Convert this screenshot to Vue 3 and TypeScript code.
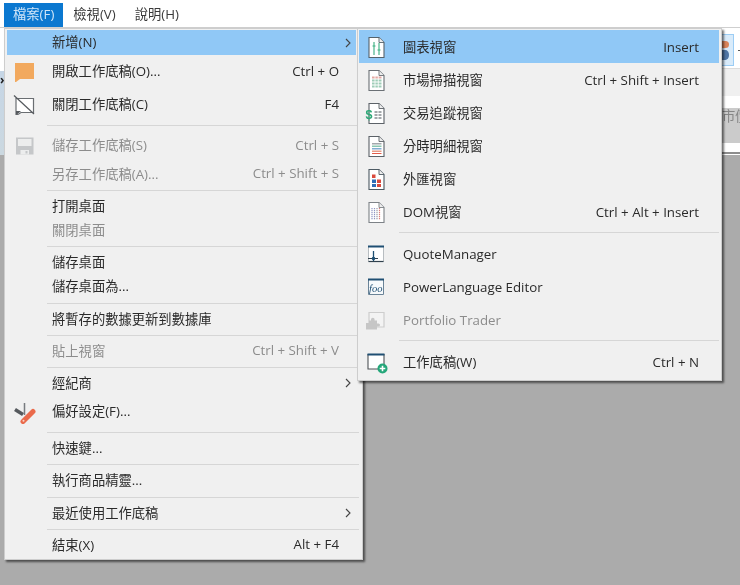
<script setup lang="ts">
interface Entry {
  sep?: boolean
  label?: string
  key?: string
  icon?: string
  tall?: boolean
  roomy?: boolean
  off?: boolean
  arrow?: boolean
  active?: boolean
}

const doc = (inner: string, stroke = '#5c6268') =>
  `<path d="M5 2.500h10l5 5v15H5z" fill="#fff" stroke="${stroke}" stroke-width="1.100"/><path d="M15 2.500v5h5" fill="#eee" stroke="${stroke}" stroke-width=".9"/>${inner}`

const icons: Record<string, string> = {
  open: '<path d="M2 3h19v16H7l-4 3H2z" fill="#f2a95e"/>',
  close:
    '<path d="M3 5.500h17.500v14H8l-3 2H3z" fill="#fff" stroke="#6a6e72" stroke-width="1.200"/><path d="M3 18h5l-4 3.500H3z" fill="#55595d"/><path d="M1 2.500 21 21" stroke="#55595d" stroke-width="1.200"/>',
  save:
    '<path d="M3 3.500h17.500v17H3z" fill="#c5c7c9"/><path d="M5 5h13.500v7H5z" fill="#eceded"/><path d="M7.500 16h8.500v4.500H7.500z" fill="#eceded"/><path d="M12.500 17h2v2.500h-2z" fill="#c5c7c9"/>',
  prefs:
    '<path d="M11.500 3v12" stroke="#777b7f" stroke-width="1.500" fill="none"/><path d="M2 9.500l8 5" stroke="#55595d" stroke-width="3.500" fill="none"/><path d="M10 21.500 20 11.500" stroke="#ea6a4b" stroke-width="5" stroke-linecap="round"/><circle cx="10.500" cy="20.800" r="1" fill="#fbd6c8"/>',
  chart: doc(
    '<path d="M10 7v13M15 8v12" stroke="#3aae80" stroke-width="1.100"/><path d="M8.500 11h3M13.500 15h3" stroke="#3aae80" stroke-width="1.100"/>',
    '#56636c',
  ),
  scan: doc(
    '<path d="M8 8.500h9.500v2H8z" fill="#e3a9a3"/><path d="M8 11.500h9.500v2H8zM8 14.500h9.500v2H8zM8 17.500h9.500v2H8z" fill="#9fcdb8"/><path d="M11 8v12M14.300 8v12" stroke="#fff" stroke-width=".8"/>',
    '#6b7075',
  ),
  trade:
    doc('<path d="M10.500 10h3v2h-3zM14.500 10h3v2h-3zM10.500 13h3v2h-3zM14.500 13h3v2h-3zM10.500 16h3v2h-3zM14.500 16h3v2h-3z" fill="#a4a8ab"/>') +
    '<text x="1.500" y="18" font-size="12.500" font-weight="700" fill="#2ea877" font-family="Liberation Sans, sans-serif">$</text>',
  tick: doc(
    '<path d="M8 9h9.500v1.500H8z" fill="#a3a8ac"/><path d="M8 11.500h9.500V13H8z" fill="#8bc7b1"/><path d="M8 14h9.500v1.500H8z" fill="#82add2"/><path d="M8 16.500h9.500V18H8z" fill="#e79a86"/><path d="M8 19h9.500v1H8z" fill="#e25c4a"/>',
  ),
  forex: doc(
    '<path d="M8 7.500h3.500v3.500H8zM13 12.500h4V16h-4z" fill="#d94a3d"/><path d="M8 12.500h4V16H8zM8 17h4v3H8z" fill="#2f6db5"/><path d="M13 17h4v3h-4z" fill="#d94a3d"/>',
    '#4d5a63',
  ),
  dom: doc(
    '<path d="M8 8v12M10.500 8v12" stroke="#8f96c4" stroke-width="1.200" stroke-dasharray="1.200 .8"/><path d="M13 8v12" stroke="#9a9ca8" stroke-width="1.200" stroke-dasharray="1.200 .8"/><path d="M15.500 8v12" stroke="#dd7f7a" stroke-width="1.200" stroke-dasharray="1.200 .8"/>',
    '#7d8287',
  ),
  quote:
    '<path d="M4.500 4.500h15v15h-15z" fill="#fff" stroke="#a7adb2" stroke-width=".8"/><path d="M4 3.500h16v2H4z" fill="#1f4f73"/><path d="M4.500 19.500h15" stroke="#30404d" stroke-width="1.200"/><path d="M4 16.500h10" stroke="#30404d" stroke-width="1"/><path d="M9.500 9v10" stroke="#1f4f73" stroke-width="1.300"/><circle cx="9.500" cy="16.500" r="1.800" fill="#1f4f73"/>',
  power:
    '<path d="M4.500 4.500h15v15h-15z" fill="#f7fafc" stroke="#6b8498" stroke-width="1"/><path d="M4 3.500h16v2H4z" fill="#1f4f73"/><text x="5" y="16.500" font-size="10.500" font-style="italic" fill="#1f4f73" font-family="Liberation Serif, serif">foo</text>',
  portfolio:
    '<path d="M5 4.500h15v14.500H5z" fill="#f3f3f3" stroke="#cdcdcd" stroke-width="1.200"/><path d="M2 15h3v-2.500h2v-1a1.800 1.800 0 0 1 3.600 0v1h2.400v3h1.500a1.500 1.500 0 0 1 0 3H13v3H2z" fill="#c6c6c6"/>',
  workspace:
    '<path d="M4 4.500h16v14.500H4z" fill="#fff" stroke="#4f5357" stroke-width="1.100"/><path d="M3.500 3.500h17v2h-17z" fill="#1f4f73"/><circle cx="18.500" cy="18.500" r="5" fill="#23a679"/><path d="M18.500 15.700v5.600M15.700 18.500h5.600" stroke="#fff" stroke-width="1.600"/>',
}

const mainItems: Entry[] = [
  { label: '新增(N)', arrow: true, active: true },
  { label: '開啟工作底稿(O)...', key: 'Ctrl + O', icon: 'open', tall: true },
  { label: '關閉工作底稿(C)', key: 'F4', icon: 'close', tall: true },
  { sep: true },
  { label: '儲存工作底稿(S)', key: 'Ctrl + S', icon: 'save', tall: true, off: true },
  { label: '另存工作底稿(A)...', key: 'Ctrl + Shift + S', off: true },
  { sep: true },
  { label: '打開桌面' },
  { label: '關閉桌面', off: true },
  { sep: true },
  { label: '儲存桌面' },
  { label: '儲存桌面為...', roomy: true },
  { sep: true },
  { label: '將暫存的數據更新到數據庫' },
  { sep: true },
  { label: '貼上視窗', key: 'Ctrl + Shift + V', off: true },
  { sep: true },
  { label: '經紀商', arrow: true },
  { label: '偏好設定(F)...', icon: 'prefs', tall: true },
  { sep: true },
  { label: '快速鍵...' },
  { sep: true },
  { label: '執行商品精靈...', roomy: true },
  { sep: true },
  { label: '最近使用工作底稿', arrow: true },
  { sep: true },
  { label: '結束(X)', key: 'Alt + F4' },
]

const subItems: Entry[] = [
  { label: '圖表視窗', key: 'Insert', icon: 'chart', tall: true, active: true },
  { label: '市場掃描視窗', key: 'Ctrl + Shift + Insert', icon: 'scan', tall: true },
  { label: '交易追蹤視窗', icon: 'trade', tall: true },
  { label: '分時明細視窗', icon: 'tick', tall: true },
  { label: '外匯視窗', icon: 'forex', tall: true },
  { label: 'DOM視窗', key: 'Ctrl + Alt + Insert', icon: 'dom', tall: true },
  { sep: true },
  { label: 'QuoteManager', icon: 'quote', tall: true },
  { label: 'PowerLanguage Editor', icon: 'power', tall: true },
  { label: 'Portfolio Trader', icon: 'portfolio', tall: true, off: true },
  { sep: true },
  { label: '工作底稿(W)', key: 'Ctrl + N', icon: 'workspace', tall: true },
]
</script>

<template>
  <div class="app">
    <nav class="menubar">
      <span class="top-item open">檔案(F)</span>
      <span class="top-item">檢視(V)</span>
      <span class="top-item">說明(H)</span>
    </nav>

    <div class="chrome">
      <div class="left-strip">
        <span class="left-mark">›</span>
      </div>
      <div class="right-strip">
        <div class="tool-row">
          <span class="tool-selected">
            <span class="dot orange"></span>
            <span class="dot blue"></span>
          </span>
          <span class="tool-dash"></span>
        </div>
        <div class="tab-row"></div>
        <div class="grid-row">
          <div class="grid-head">市價</div>
        </div>
      </div>
    </div>

    <div class="desktop"></div>

    <div class="menu main-menu">
      <template v-for="(item, i) in mainItems" :key="i">
        <div v-if="item.sep" class="sep"></div>
        <div v-else class="row" :class="{ tall: item.tall, roomy: item.roomy, off: item.off, active: item.active }">
          <svg v-if="item.icon" class="icon" viewBox="0 0 24 24" width="24" height="24" v-html="icons[item.icon]"></svg>
          <span v-else class="icon"></span>
          <span class="label">{{ item.label }}</span>
          <span class="key">{{ item.key }}</span>
          <span class="arrow-cell">
            <svg v-if="item.arrow" width="6" height="10" viewBox="0 0 6 10">
              <path d="M1 1l4 4-4 4" fill="none" stroke="#444" stroke-width="1.100" />
            </svg>
          </span>
        </div>
      </template>
    </div>

    <div class="menu sub-menu">
      <template v-for="(item, i) in subItems" :key="i">
        <div v-if="item.sep" class="sep"></div>
        <div v-else class="row tall" :class="{ off: item.off, active: item.active }">
          <svg class="icon" viewBox="0 0 24 24" width="24" height="24" v-html="icons[item.icon ?? '']"></svg>
          <span class="label">{{ item.label }}</span>
          <span class="key">{{ item.key }}</span>
        </div>
      </template>
    </div>
  </div>
</template>

<style>
html,
body {
  margin: 0;
  background: #ababab;
}
</style>

<style scoped>
.app {
  position: relative;
  width: 740px;
  height: 585px;
  overflow: hidden;
  display: flex;
  flex-direction: column;
  background: #ababab;
  font-family: "Open Sans", "Noto Sans CJK TC", sans-serif;
  font-size: 13.3px;
  color: #2a2a2a;
  filter: blur(0.3px);
}

.menubar {
  box-sizing: border-box;
  height: 28px;
  flex: none;
  display: flex;
  gap: 1px;
  padding: 3px 0 0 4px;
  background: #fff;
  border-bottom: 1px solid #cfcfcf;
}

.top-item {
  height: 24px;
  line-height: 23px;
  padding: 0 9px;
  color: #3a3a3a;
}

.top-item.open {
  background: #0b78d0;
  color: #cfe5f8;
}

.chrome {
  height: 127px;
  flex: none;
  display: flex;
  justify-content: space-between;
  background: #fff;
}

.left-strip {
  width: 5px;
  margin-top: 43px;
  background: linear-gradient(#c6d6e6, #cbd8e0);
  overflow: hidden;
}

.left-mark {
  display: block;
  margin-top: 2px;
  font-size: 12px;
  font-weight: 700;
  line-height: 14px;
  color: #222;
}

.right-strip {
  width: 18px;
  display: flex;
  flex-direction: column;
}

.tool-row {
  height: 41px;
  flex: none;
  display: flex;
  align-items: center;
  gap: 4px;
  padding-top: 4px;
  box-sizing: border-box;
  border-bottom: 1px solid #dcdcdc;
}

.tool-selected {
  box-sizing: border-box;
  width: 12px;
  height: 32px;
  display: flex;
  flex-direction: column;
  justify-content: center;
  gap: 2px;
  background: #d9ebfa;
  border: 1px solid #9ccdf5;
  border-left: 0;
}

.dot {
  display: block;
  width: 7px;
  height: 7px;
  border-radius: 0 50% 50% 0;
}

.dot.orange {
  background: #d9845a;
}

.dot.blue {
  height: 10px;
  background: #4f75a5;
}

.tool-dash {
  width: 2px;
  height: 1px;
  background: #555;
}

.tab-row {
  height: 27px;
  flex: none;
  background: #f0f0f0;
}

.grid-row {
  height: 58px;
  flex: none;
  padding-top: 12px;
  border-bottom: 2px solid #8d8d8d;
  box-sizing: border-box;
  background: #fff;
}

.grid-head {
  height: 35px;
  overflow: hidden;
  white-space: nowrap;
  line-height: 16px;
  background: #cbcbcb;
  color: #858585;
}

.desktop {
  flex: 1;
  background: #ababab;
}

.menu {
  position: absolute;
  top: 28px;
  box-sizing: border-box;
  background: #f0f0f0;
  border: 1px solid #cdcdcd;
  box-shadow: 2px 2px 2px rgba(0, 0, 0, 0.55);
}

.main-menu {
  left: 4px;
  width: 359px;
  height: 532px;
  padding: 1px 6px 3px 2px;
}

.sub-menu {
  left: 357px;
  width: 365px;
  height: 353px;
  padding: 1px 2px 2px 1px;
}

.row {
  height: 24px;
  display: flex;
  align-items: center;
  white-space: nowrap;
}

.main-menu .row.active,
.main-menu .row.roomy {
  height: 25px;
}

.main-menu .row {
  padding-left: 6px;
}

.sub-menu .row {
  padding: 0 20px 0 5px;
}

.row.tall {
  height: 33px;
}

.row.active {
  background: #90c8f6;
}

.row.off {
  color: #8c8c8c;
}

.icon {
  width: 24px;
  height: 24px;
  flex: none;
  margin-right: 15px;
}

.label {
  flex: 1;
}

.key {
  flex: none;
}

.main-menu .label,
.main-menu .key {
  padding-bottom: 2px;
}

.arrow-cell {
  width: 17px;
  flex: none;
  display: flex;
  justify-content: center;
  align-items: center;
}

.sep {
  height: 1px;
  margin: 4px -3px 3px 40px;
  background: #d6d6d6;
}

.sub-menu .sep {
  margin: 4px 0 4px 40px;
}
</style>
